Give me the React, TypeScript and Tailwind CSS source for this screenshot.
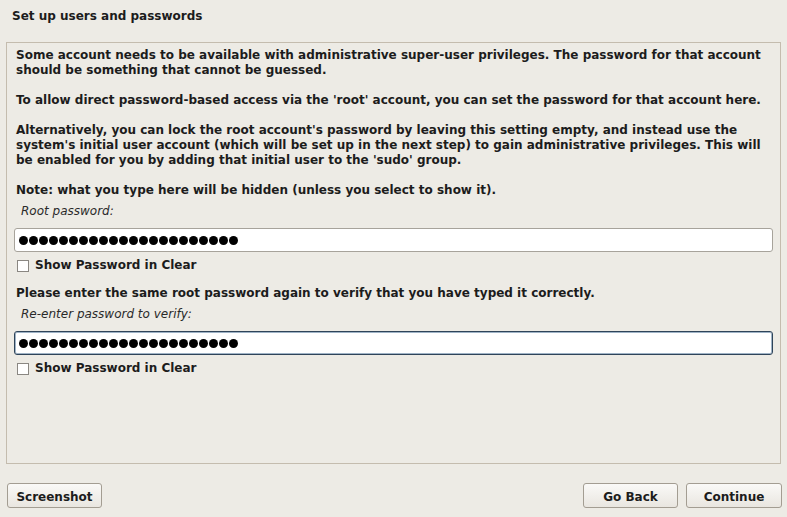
import React from "react"

const font = { fontFamily: '"DejaVu Sans", Verdana, sans-serif' }

function Dots({ count }: { count: number }) {
  return (
    <div className="flex gap-[1px]">
      {Array.from({ length: count }).map((_, i) => (
        <span key={i} className="block h-[9px] w-[9px] rounded-full bg-black" />
      ))}
    </div>
  )
}

function PasswordEntry({ focused }: { focused?: boolean }) {
  return (
    <div
      className={
        focused
          ? "flex h-[24px] items-center rounded-[3px] border border-[#2f4459] bg-white pl-[4px] shadow-[inset_0_0_0_1px_#9fb3c6]"
          : "flex h-[24px] items-center rounded-[3px] border border-[#a7a39b] bg-white pl-[4px]"
      }
    >
      <Dots count={22} />
    </div>
  )
}

function ShowCheckbox() {
  return (
    <label className="mt-[6px] flex h-[15px] items-center gap-[6px] pl-[3px]">
      <span className="block h-[12px] w-[12px] border border-[#8a8782] bg-white" />
      <span className="text-[12px] font-bold leading-[15px] text-[#1c1c1c]">Show Password in Clear</span>
    </label>
  )
}

function DialogButton({ label, width }: { label: string; width: string }) {
  return (
    <button
      className={`${width} h-[25px] rounded-[3px] border border-[#a39d92] bg-gradient-to-b from-[#faf9f7] to-[#e9e6e0] pt-[2px] text-[12px] font-bold text-[#1c1c1c]`}
    >
      {label}
    </button>
  )
}

export default function App() {
  return (
    <div className="flex h-screen w-full flex-col bg-[#edebe5] text-[#1c1c1c]" style={font}>
      <div className="h-[42px] shrink-0 pl-[12px] pt-[9px] text-[12px] font-bold leading-[15px]">
        Set up users and passwords
      </div>

      <div className="mx-[6px] flex-1 border border-[#c4bcae] px-[7px] pt-[5px]">
        <div className="pl-[2px] text-[12px] font-bold leading-[15px]">
          <p className="mb-[15px] whitespace-nowrap">
            Some account needs to be available with administrative super-user privileges. The password for that account
            <br />
            should be something that cannot be guessed.
          </p>
          <p className="mb-[15px] whitespace-nowrap">
            To allow direct password-based access via the 'root' account, you can set the password for that account here.
          </p>
          <p className="mb-[15px] whitespace-nowrap">
            Alternatively, you can lock the root account's password by leaving this setting empty, and instead use the
            <br />
            system's initial user account (which will be set up in the next step) to gain administrative privileges. This will
            <br />
            be enabled for you by adding that initial user to the 'sudo' group.
          </p>
          <p className="whitespace-nowrap">Note: what you type here will be hidden (unless you select to show it).</p>
        </div>

        <div className="mt-[6px] pl-[7px] text-[12px] italic leading-[15px] text-[#2a2a2a]">Root password:</div>
        <div className="mt-[9px]">
          <PasswordEntry />
        </div>
        <ShowCheckbox />

        <div className="mt-[13px] whitespace-nowrap pl-[2px] text-[12px] font-bold leading-[15px]">
          Please enter the same root password again to verify that you have typed it correctly.
        </div>
        <div className="mt-[6px] pl-[7px] text-[12px] italic leading-[15px] text-[#2a2a2a]">
          Re-enter password to verify:
        </div>
        <div className="mt-[9px]">
          <PasswordEntry focused />
        </div>
        <ShowCheckbox />
      </div>

      <div className="flex shrink-0 items-center justify-between pb-[9px] pl-[7px] pr-[5px] pt-[19px]">
        <DialogButton label="Screenshot" width="w-[95px]" />
        <div className="flex gap-[8px]">
          <DialogButton label="Go Back" width="w-[95px]" />
          <DialogButton label="Continue" width="w-[96px]" />
        </div>
      </div>
    </div>
  )
}
